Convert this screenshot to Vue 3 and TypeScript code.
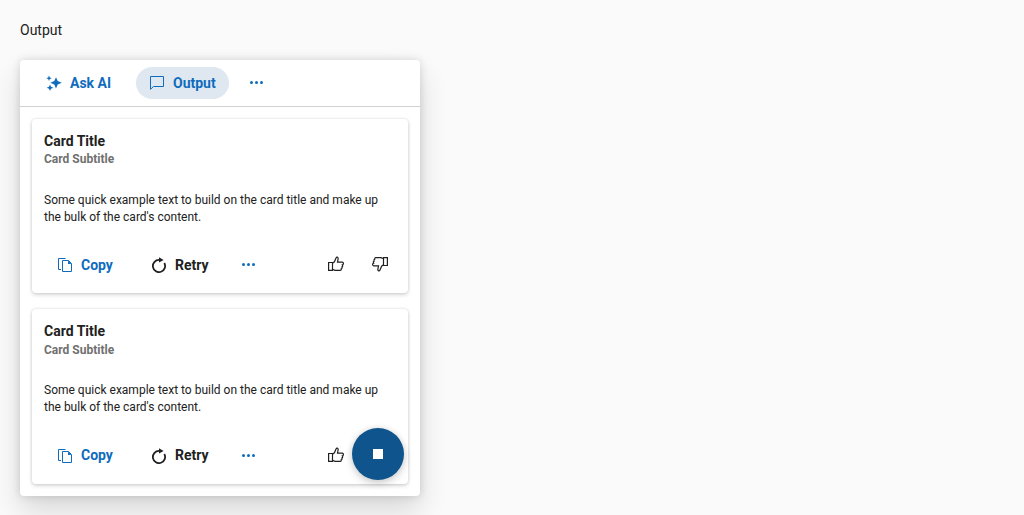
<script setup lang="ts">
interface OutputCard {
  id: number
  title: string
  subtitle: string
  text: string
}

const cards: OutputCard[] = [1, 2].map((id) => ({
  id,
  title: 'Card Title',
  subtitle: 'Card Subtitle',
  text: "Some quick example text to build on the card title and make up the bulk of the card's content.",
}))

const thumb =
  'M.6 6.5H4.5V14.4H.6ZM4.5 7.3L6.4 5.8L8 2Q8.4 .9 9.3 1.1Q10.3 1.4 10.1 2.8L9.5 6.2H14.2Q15.5 6.5 15.4 7.7Q15.3 8.7 14.3 8.8Q15.2 10.7 13.8 11Q14.6 12.4 13.2 12.8Q13.5 14.3 12.2 14.4H7L4.5 13.3'
</script>

<template>
  <main class="page">
    <p class="label">Output</p>
    <section class="prompt">
      <header class="toolbar">
        <button class="btn primary ask">
          <svg class="icon" viewBox="0 0 16 16" fill="currentColor">
            <path d="M10 2.2L11.7 6.1L15.8 7.8L11.7 9.5L10 13.5L8.3 9.5L4.4 7.8L8.3 6.1ZM3 .6L3.8 2.5L5.8 3.3L3.8 4.1L3 6L2.2 4.1L.2 3.3L2.2 2.5ZM4 9.4L5 11.7L7.3 12.7L5 13.7L4 16L3 13.7L.7 12.7L3 11.7Z" />
          </svg>
          <span>Ask AI</span>
        </button>
        <button class="btn primary selected">
          <svg class="icon" viewBox="0 0 16 16" fill="none" stroke="currentColor">
            <path d="M1.5 1.5H14.5V11.5H4.5L1.5 14.3Z" />
          </svg>
          <span>Output</span>
        </button>
        <button class="btn primary more">
          <svg class="icon" viewBox="0 0 16 16" fill="currentColor">
            <circle cx="2.5" cy="7.5" r="1.5" /><circle cx="7.5" cy="7.5" r="1.5" /><circle cx="12.5" cy="7.5" r="1.5" />
          </svg>
        </button>
      </header>
      <div class="content">
        <article v-for="card in cards" :key="card.id" class="card">
          <h2 class="title">{{ card.title }}</h2>
          <h3 class="subtitle">{{ card.subtitle }}</h3>
          <p class="text">{{ card.text }}</p>
          <div class="actions">
            <button class="btn primary copy">
              <svg class="icon" viewBox="0 0 16 16" fill="none" stroke="currentColor">
                <path d="M8.5 1.5H1.5V12.5H4M5.5 3.5H11.5L14.5 6.5V14.5H5.5Z" />
                <path d="M11 3.5V7H14.5Z" fill="currentColor" stroke="none" />
              </svg>
              <span>Copy</span>
            </button>
            <button class="btn retry">
              <svg class="icon" viewBox="0 0 16 16">
                <path d="M13.3 6A6.1 6.1 0 1 1 8 2.9H9" fill="none" stroke="currentColor" stroke-width="1.8" />
                <path d="M8 .3L12.6 2.9L8 5.5Z" fill="currentColor" />
              </svg>
              <span>Retry</span>
            </button>
            <button class="btn primary more">
              <svg class="icon" viewBox="0 0 16 16" fill="currentColor">
                <circle cx="2.5" cy="7.5" r="1.5" /><circle cx="7.5" cy="7.5" r="1.5" /><circle cx="12.5" cy="7.5" r="1.5" />
              </svg>
            </button>
            <span class="spacer"></span>
            <button class="btn vote">
              <svg class="icon" viewBox="0 0 16 16" fill="none" stroke="currentColor" stroke-width="1.2">
                <path :d="thumb" />
              </svg>
            </button>
            <button class="btn vote">
              <svg class="icon flipped" viewBox="0 0 16 16" fill="none" stroke="currentColor" stroke-width="1.2">
                <path :d="thumb" />
              </svg>
            </button>
          </div>
        </article>
      </div>
      <button class="fab" aria-label="Stop"><span class="stop"></span></button>
    </section>
  </main>
</template>

<style>
body {
  background: #fafafa;
}
</style>

<style scoped>
.page {
  box-sizing: border-box;
  height: 515px;
  overflow: hidden;
  padding: 20px;
  color: #212121;
  font: 14px/20px Roboto, sans-serif;
}
.label {
  margin: 0 0 20px;
}
.prompt {
  position: relative;
  box-sizing: border-box;
  width: 400px;
  height: 436px;
  border-radius: 4px;
  background: #fff;
  box-shadow: 0 14px 28px rgba(0, 0, 0, 0.14), 0 0 8px rgba(0, 0, 0, 0.14);
}
.toolbar {
  box-sizing: border-box;
  display: flex;
  align-items: center;
  height: 47px;
  padding: 0 12px;
  border-bottom: 1px solid #d1d1d1;
}
.btn {
  display: flex;
  align-items: center;
  gap: 8px;
  box-sizing: border-box;
  height: 32px;
  padding: 0 13px;
  border: 0;
  border-radius: 16px;
  background: none;
  color: #212121;
  font: bold 14px/20px Roboto, sans-serif;
}
.primary {
  color: #0f6cbd;
}
.selected {
  width: 93px;
  background: #dfe8f0;
}
.ask {
  width: 92px;
  padding: 0 12px 0 14px;
  margin-right: 12px;
}
.icon {
  flex: none;
  display: block;
  width: 16px;
  height: 16px;
}
.more {
  width: 32px;
  padding: 0 8px;
  margin-left: 12px;
}
.content {
  display: flex;
  flex-direction: column;
  gap: 16px;
  padding: 12px;
}
.card {
  box-sizing: border-box;
  height: 174.4px;
  padding: 12px;
  border-radius: 4px;
  background: #fff;
  box-shadow: 0 2px 4px rgba(0, 0, 0, 0.14), 0 0 3px rgba(0, 0, 0, 0.14);
}
.title {
  margin: 0;
  font: bold 14px/20px Roboto, sans-serif;
}
.subtitle {
  margin: 0.2px 0 0;
  color: #707070;
  font: bold 12px/17px Roboto, sans-serif;
}
.text {
  margin: 23.8px 0 0;
  font-size: 12px;
  line-height: 17px;
}
.actions {
  display: flex;
  align-items: center;
  margin-top: 23px;
}
.actions .icon {
  margin-top: 0.4px;
}
.copy {
  width: 82px;
}
.retry {
  width: 91px;
  margin-left: 12px;
}
.actions .more {
  margin-left: 4px;
}
.spacer {
  flex: 1;
}
.vote {
  padding: 0 8px;
}
.vote + .vote {
  margin-left: 12px;
}
.actions .vote .icon {
  margin-top: -1.6px;
}
.flipped {
  transform: rotate(180deg);
}
.fab {
  position: absolute;
  right: 16px;
  bottom: 16px;
  display: flex;
  align-items: center;
  justify-content: center;
  width: 52px;
  height: 52px;
  padding: 0;
  border: 0;
  border-radius: 50%;
  background: #0f548c;
  box-shadow: 0 4px 8px rgba(0, 0, 0, 0.14), 0 0 6px rgba(0, 0, 0, 0.12);
}
.stop {
  width: 10px;
  height: 10px;
  background: #fff;
}
</style>
